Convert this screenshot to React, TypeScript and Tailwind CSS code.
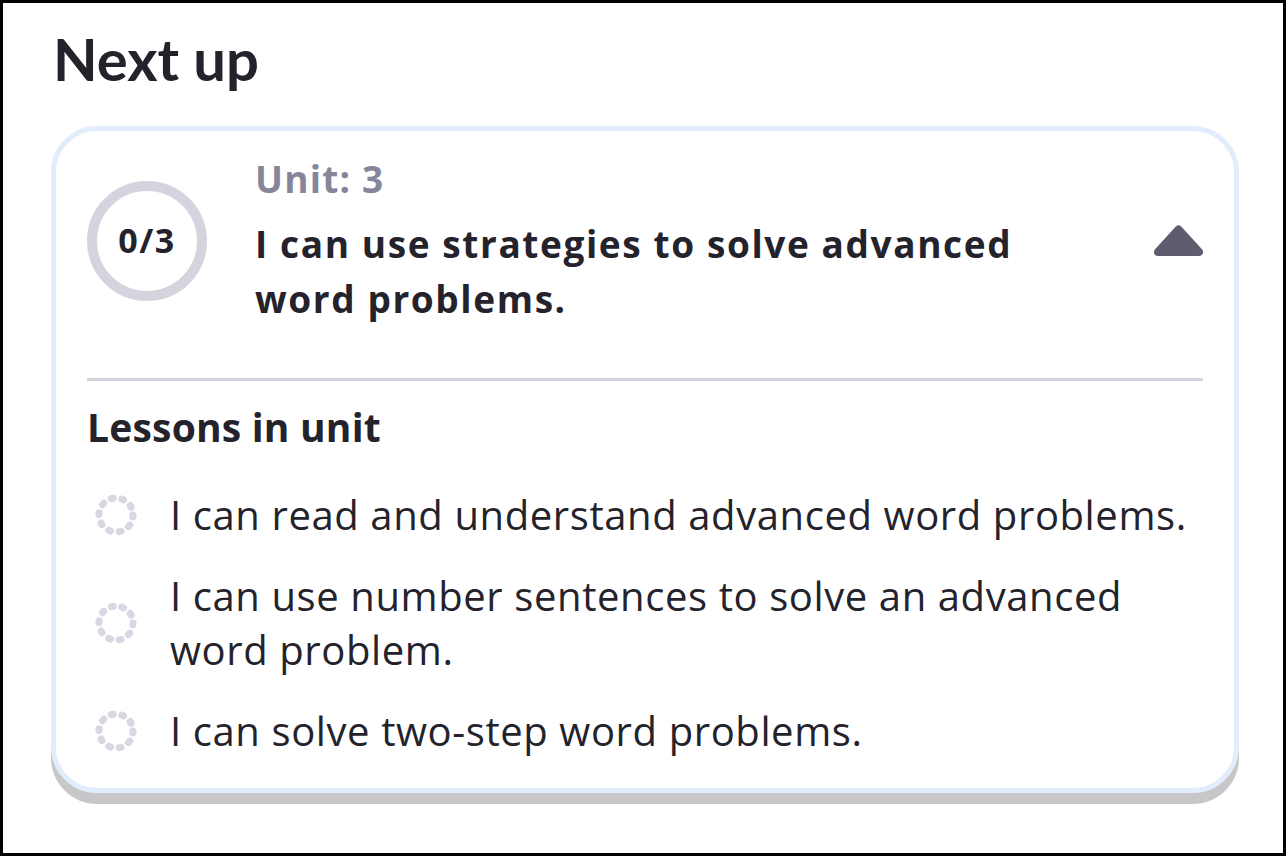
import { Fragment } from 'react';

const lessons = [
  'I can read and understand advanced word problems.',
  'I can use number sentences to solve an advanced word problem.',
  'I can solve two-step word problems.',
];

// Dotted ring shown beside a lesson that hasn't been started
const PendingDot = () => (
  <svg width="42" height="42" viewBox="0 0 42 42" className="shrink-0">
    <circle
      cx="21"
      cy="21"
      r="17"
      fill="none"
      stroke="#d8d8e3"
      strokeWidth="7"
      strokeLinecap="round"
      strokeDasharray="2 8.68"
    />
  </svg>
);

const CollapseArrow = () => (
  <svg width="49" height="31" viewBox="0 0 49 31" className="shrink-0">
    <polygon
      points="24.5,4.5 45,27 4,27"
      fill="#5e5c6f"
      stroke="#5e5c6f"
      strokeWidth="8"
      strokeLinejoin="round"
    />
  </svg>
);

const App = () => {
  return (
    <div
      className="w-[1286px] h-[856px] border-[3px] border-black bg-white pl-[48px] pr-[44px] pt-[27px] text-[#24232c]"
      style={{ fontFamily: '"Open Sans", "Noto Sans", sans-serif' }}
    >
      <h2
        className="text-[58px] font-bold leading-none pl-[2px]"
        style={{ fontFamily: 'Lato, sans-serif' }}
      >
        Next up
      </h2>

      <div className="mt-[38px] rounded-[46px] border-[5px] border-[#e1edfd] bg-white shadow-[0_11px_0_#c7c7c9] px-[31px] pt-[24px] pb-[30px]">
        <div className="flex items-center">
          <div className="w-[120px] h-[120px] shrink-0 rounded-full border-[10px] border-[#d4d4de] flex items-center justify-center">
            <span className="text-[34px] font-bold tracking-[1.5px]">0/3</span>
          </div>
          <div className="ml-[48px] flex-1 max-w-[790px]">
            <div className="text-[37px] font-bold leading-[48px] tracking-[1.2px] text-[#868599]">Unit: 3</div>
            <div className="mt-[13px] text-[37px] font-bold leading-[55px] tracking-[1.6px]">
              I can use strategies to solve advanced word problems.
            </div>
          </div>
          <div className="ml-auto">
            <CollapseArrow />
          </div>
        </div>

        <div className="mt-[52px] h-[3px] bg-[#d4d4de]" />

        <div className="mt-[21px] text-[39px] font-bold leading-[50px] tracking-[0.2px]">Lessons in unit</div>

        <ul className="mt-[36px] flex flex-col gap-[27px] pl-[8px]">
          {lessons.map((lesson) => (
            <Fragment key={lesson}>
              <li className="flex items-center gap-[33px]">
                <PendingDot />
                <span className="flex-1 text-[40px] leading-[54px] tracking-[0.6px]">{lesson}</span>
              </li>
            </Fragment>
          ))}
        </ul>
      </div>
    </div>
  );
};

export default App;
